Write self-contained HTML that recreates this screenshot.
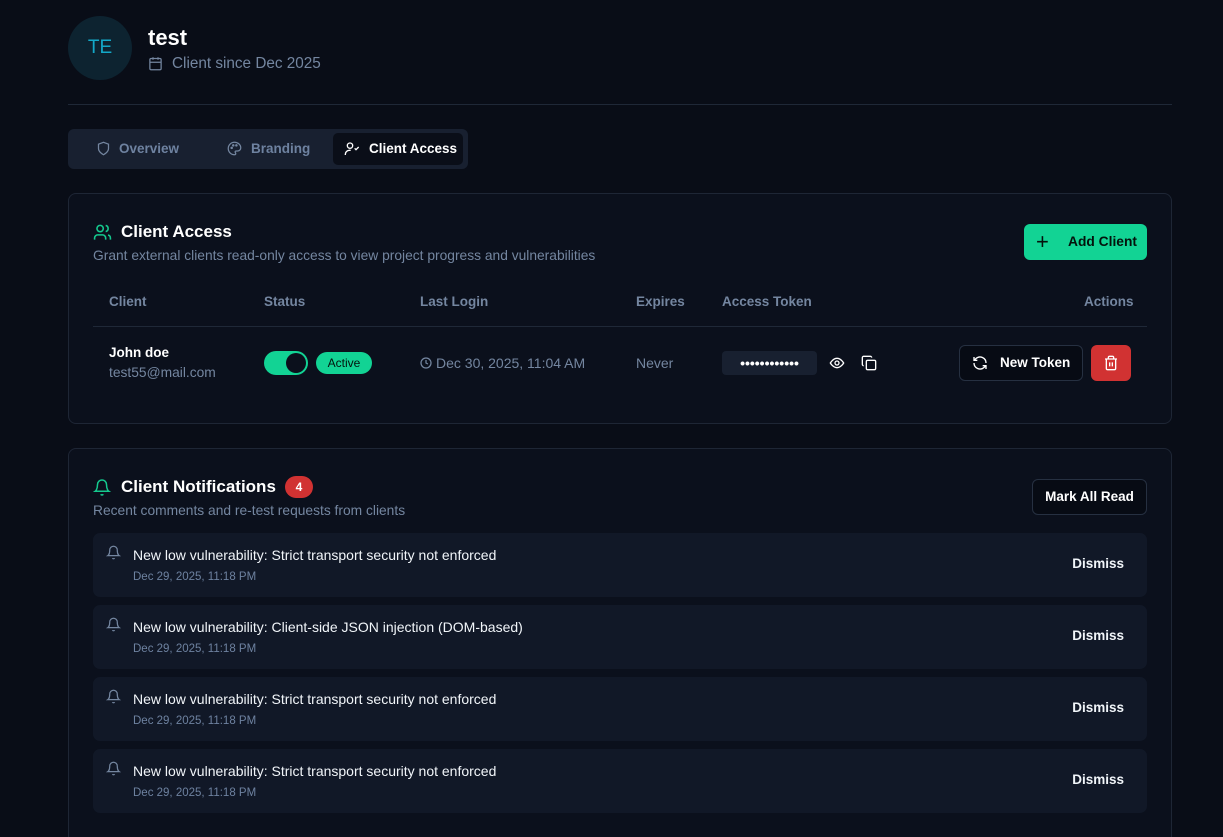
<!DOCTYPE html>
<html style="overflow:hidden;width:1223px;height:837px"><head><meta charset="utf-8"><style>
*{box-sizing:border-box;margin:0;padding:0}
body{width:1223px;height:837px;overflow:hidden;background:#090d17;font-family:"Liberation Sans",sans-serif;color:#fff;position:relative}
.abs{position:absolute}
.card{position:absolute;left:68px;width:1104px;background:#0b101c;border:1px solid #1e2635;border-radius:8px}
.muted{color:#7486a0}
svg{display:block}
.th{position:absolute;top:294px;font-size:13.5px;font-weight:bold;color:#7486a0}
.note{position:absolute;left:93px;width:1054px;height:64px;background:#111827;border-radius:7px}
.note .t{position:absolute;left:40px;top:14px;font-size:14px;color:#f1f5f9}
.note .d{position:absolute;left:40px;top:38px;font-size:11.5px;color:#6e82a0}
.note .x{position:absolute;right:23px;top:23px;font-size:13.5px;font-weight:bold;color:#f1f5f9}
.note svg{position:absolute;left:13px;top:12px}
</style></head><body>
<div class="abs" style="left:68px;top:16px;width:64px;height:64px;border-radius:50%;background:#0d2330;color:#13a8c8;font-size:19px;text-align:center;line-height:64px">TE</div>
<div class="abs" style="left:148px;top:25px;font-size:22px;font-weight:bold">test</div>
<svg class="abs" style="left:148px;top:56px" width="15" height="15" viewBox="0 0 24 24" fill="none" stroke="#7486a0" stroke-width="2"><rect x="3" y="4" width="18" height="18" rx="2"/><path d="M16 2v4M8 2v4M3 10h18"/></svg>
<div class="abs muted" style="left:172px;top:55px;font-size:15.3px">Client since Dec 2025</div>
<div class="abs" style="left:68px;top:104px;width:1104px;height:1px;background:#1f2837"></div>

<div class="abs" style="left:68px;top:129px;width:400px;height:40px;background:#182030;border-radius:6px"></div>
<div class="abs" style="left:333px;top:133px;width:130px;height:32px;background:#0a0e18;border-radius:5px"></div>
<svg class="abs" style="left:96px;top:141px" width="15" height="15" viewBox="0 0 24 24" fill="none" stroke="#7486a0" stroke-width="2"><path d="M12 22s8-4 8-10V5l-8-3-8 3v7c0 6 8 10 8 10z"/></svg>
<div class="abs" style="left:119px;top:141px;font-size:13.5px;font-weight:bold;color:#6e82a0">Overview</div>
<svg class="abs" style="left:227px;top:141px" width="15" height="15" viewBox="0 0 24 24" fill="none" stroke="#7486a0" stroke-width="2"><path d="M12 2a10 10 0 0 0 0 20c1.5 0 2-1 2-2s-1-1.5-1-2.5 1-1.5 2-1.5h2a5 5 0 0 0 5-5c0-5-4.5-9-10-9z"/><circle cx="7.5" cy="11" r="1"/><circle cx="10" cy="7" r="1"/><circle cx="15" cy="7" r="1"/></svg>
<div class="abs" style="left:251px;top:141px;font-size:13.5px;font-weight:bold;color:#6e82a0">Branding</div>
<svg class="abs" style="left:344px;top:141px" width="16" height="16" viewBox="0 0 24 24" fill="none" stroke="#fff" stroke-width="2"><circle cx="9" cy="7" r="4"/><path d="M2 21v-1a6 6 0 0 1 6-6h2M16 11l2 2 4-4"/></svg>
<div class="abs" style="left:369px;top:141px;font-size:13.5px;font-weight:bold">Client Access</div>

<div class="card" style="top:193px;height:231px"></div>
<svg class="abs" style="left:93px;top:223px" width="19" height="19" viewBox="0 0 24 24" fill="none" stroke="#14c98e" stroke-width="2"><circle cx="9" cy="7" r="4"/><path d="M2 21v-2a4 4 0 0 1 4-4h6a4 4 0 0 1 4 4v2M16 3.1a4 4 0 0 1 0 7.8M22 21v-2a4 4 0 0 0-3-3.9"/></svg>
<div class="abs" style="left:121px;top:222px;font-size:17px;font-weight:bold">Client Access</div>
<div class="abs muted" style="left:93px;top:248px;font-size:13.8px">Grant external clients read-only access to view project progress and vulnerabilities</div>
<div class="abs" style="left:1024px;top:224px;width:123px;height:36px;background:#12d394;border-radius:6px;color:#04120c;font-size:13.8px;font-weight:bold">
<span style="position:absolute;left:12px;top:5px;font-size:22px;font-weight:normal">+</span><span style="position:absolute;left:44px;top:10px">Add Client</span></div>
<div class="th" style="left:109px">Client</div>
<div class="th" style="left:264px">Status</div>
<div class="th" style="left:420px">Last Login</div>
<div class="th" style="left:636px">Expires</div>
<div class="th" style="left:722px">Access Token</div>
<div class="th" style="left:1084px">Actions</div>
<div class="abs" style="left:93px;top:326px;width:1054px;height:1px;background:#1f2837"></div>
<div class="abs" style="left:109px;top:345px;font-size:13.5px;font-weight:bold">John doe</div>
<div class="abs muted" style="left:109px;top:365px;font-size:13.8px">test55@mail.com</div>
<div class="abs" style="left:264px;top:351px;width:44px;height:24px;background:#12d394;border-radius:12px"><div style="position:absolute;right:2px;top:2px;width:20px;height:20px;border-radius:50%;background:#0b101c"></div></div>
<div class="abs" style="left:316px;top:352px;width:56px;height:22px;background:#12d394;border-radius:11px;color:#04120c;font-size:12px;text-align:center;line-height:22px">Active</div>
<svg class="abs" style="left:420px;top:357px" width="12" height="12" viewBox="0 0 24 24" fill="none" stroke="#7486a0" stroke-width="2.5"><circle cx="12" cy="12" r="10"/><path d="M12 6v6l4 2"/></svg>
<div class="abs muted" style="left:436px;top:355px;font-size:14px">Dec 30, 2025, 11:04 AM</div>
<div class="abs muted" style="left:636px;top:355px;font-size:14px">Never</div>
<div class="abs" style="left:722px;top:351px;width:95px;height:24px;background:#182030;border-radius:4px;font-size:14px;letter-spacing:0px;text-align:center;line-height:24px;font-weight:bold">••••••••••••</div>
<svg class="abs" style="left:829px;top:355px" width="16" height="16" viewBox="0 0 24 24" fill="none" stroke="#fff" stroke-width="2"><path d="M2 12s4-7 10-7 10 7 10 7-4 7-10 7S2 12 2 12z"/><circle cx="12" cy="12" r="3"/></svg>
<svg class="abs" style="left:861px;top:355px" width="16" height="16" viewBox="0 0 24 24" fill="none" stroke="#fff" stroke-width="2"><rect x="8" y="8" width="14" height="14" rx="2"/><path d="M4 16c-1 0-2-1-2-2V4c0-1 1-2 2-2h10c1 0 2 1 2 2"/></svg>
<div class="abs" style="left:959px;top:345px;width:124px;height:36px;border:1px solid #263041;border-radius:6px;background:#070b14"></div>
<svg class="abs" style="left:972px;top:355px" width="16" height="16" viewBox="0 0 24 24" fill="none" stroke="#fff" stroke-width="2"><path d="M21 12a9 9 0 0 0-15-6.7L3 8M3 3v5h5M3 12a9 9 0 0 0 15 6.7l3-2.7M21 21v-5h-5"/></svg>
<div class="abs" style="left:1000px;top:355px;font-size:13.5px;font-weight:bold">New Token</div>
<div class="abs" style="left:1091px;top:345px;width:40px;height:36px;background:#d13232;border-radius:6px"></div>
<svg class="abs" style="left:1103px;top:355px" width="16" height="16" viewBox="0 0 24 24" fill="none" stroke="#fff" stroke-width="2"><path d="M3 6h18M19 6v14a2 2 0 0 1-2 2H7a2 2 0 0 1-2-2V6M8 6V4a2 2 0 0 1 2-2h4a2 2 0 0 1 2 2v2M10 11v6M14 11v6"/></svg>

<div class="card" style="top:448px;height:400px"></div>
<svg class="abs" style="left:93px;top:478px" width="18" height="19" viewBox="0 0 24 24" fill="none" stroke="#14c98e" stroke-width="2"><path d="M6 8a6 6 0 0 1 12 0c0 7 3 9 3 9H3s3-2 3-9M10.3 21a1.9 1.9 0 0 0 3.4 0"/></svg>
<div class="abs" style="left:121px;top:477px;font-size:17px;font-weight:bold">Client Notifications</div>
<div class="abs" style="left:285px;top:476px;width:28px;height:22px;background:#d13232;border-radius:11px;font-size:12px;font-weight:bold;text-align:center;line-height:22px">4</div>
<div class="abs muted" style="left:93px;top:503px;font-size:13.8px">Recent comments and re-test requests from clients</div>
<div class="abs" style="left:1032px;top:479px;width:115px;height:36px;border:1px solid #263041;border-radius:6px;background:#070b14;font-size:13.5px;font-weight:bold;text-align:center;line-height:34px">Mark All Read</div>

<div class="note" style="top:533px"><svg width="15" height="15" viewBox="0 0 24 24" fill="none" stroke="#7486a0" stroke-width="2"><path d="M6 8a6 6 0 0 1 12 0c0 7 3 9 3 9H3s3-2 3-9M10.3 21a1.9 1.9 0 0 0 3.4 0"/></svg><div class="t">New low vulnerability: Strict transport security not enforced</div><div class="d">Dec 29, 2025, 11:18 PM</div><div class="x">Dismiss</div></div>
<div class="note" style="top:605px"><svg width="15" height="15" viewBox="0 0 24 24" fill="none" stroke="#7486a0" stroke-width="2"><path d="M6 8a6 6 0 0 1 12 0c0 7 3 9 3 9H3s3-2 3-9M10.3 21a1.9 1.9 0 0 0 3.4 0"/></svg><div class="t">New low vulnerability: Client-side JSON injection (DOM-based)</div><div class="d">Dec 29, 2025, 11:18 PM</div><div class="x">Dismiss</div></div>
<div class="note" style="top:677px"><svg width="15" height="15" viewBox="0 0 24 24" fill="none" stroke="#7486a0" stroke-width="2"><path d="M6 8a6 6 0 0 1 12 0c0 7 3 9 3 9H3s3-2 3-9M10.3 21a1.9 1.9 0 0 0 3.4 0"/></svg><div class="t">New low vulnerability: Strict transport security not enforced</div><div class="d">Dec 29, 2025, 11:18 PM</div><div class="x">Dismiss</div></div>
<div class="note" style="top:749px"><svg width="15" height="15" viewBox="0 0 24 24" fill="none" stroke="#7486a0" stroke-width="2"><path d="M6 8a6 6 0 0 1 12 0c0 7 3 9 3 9H3s3-2 3-9M10.3 21a1.9 1.9 0 0 0 3.4 0"/></svg><div class="t">New low vulnerability: Strict transport security not enforced</div><div class="d">Dec 29, 2025, 11:18 PM</div><div class="x">Dismiss</div></div>
</body></html>
